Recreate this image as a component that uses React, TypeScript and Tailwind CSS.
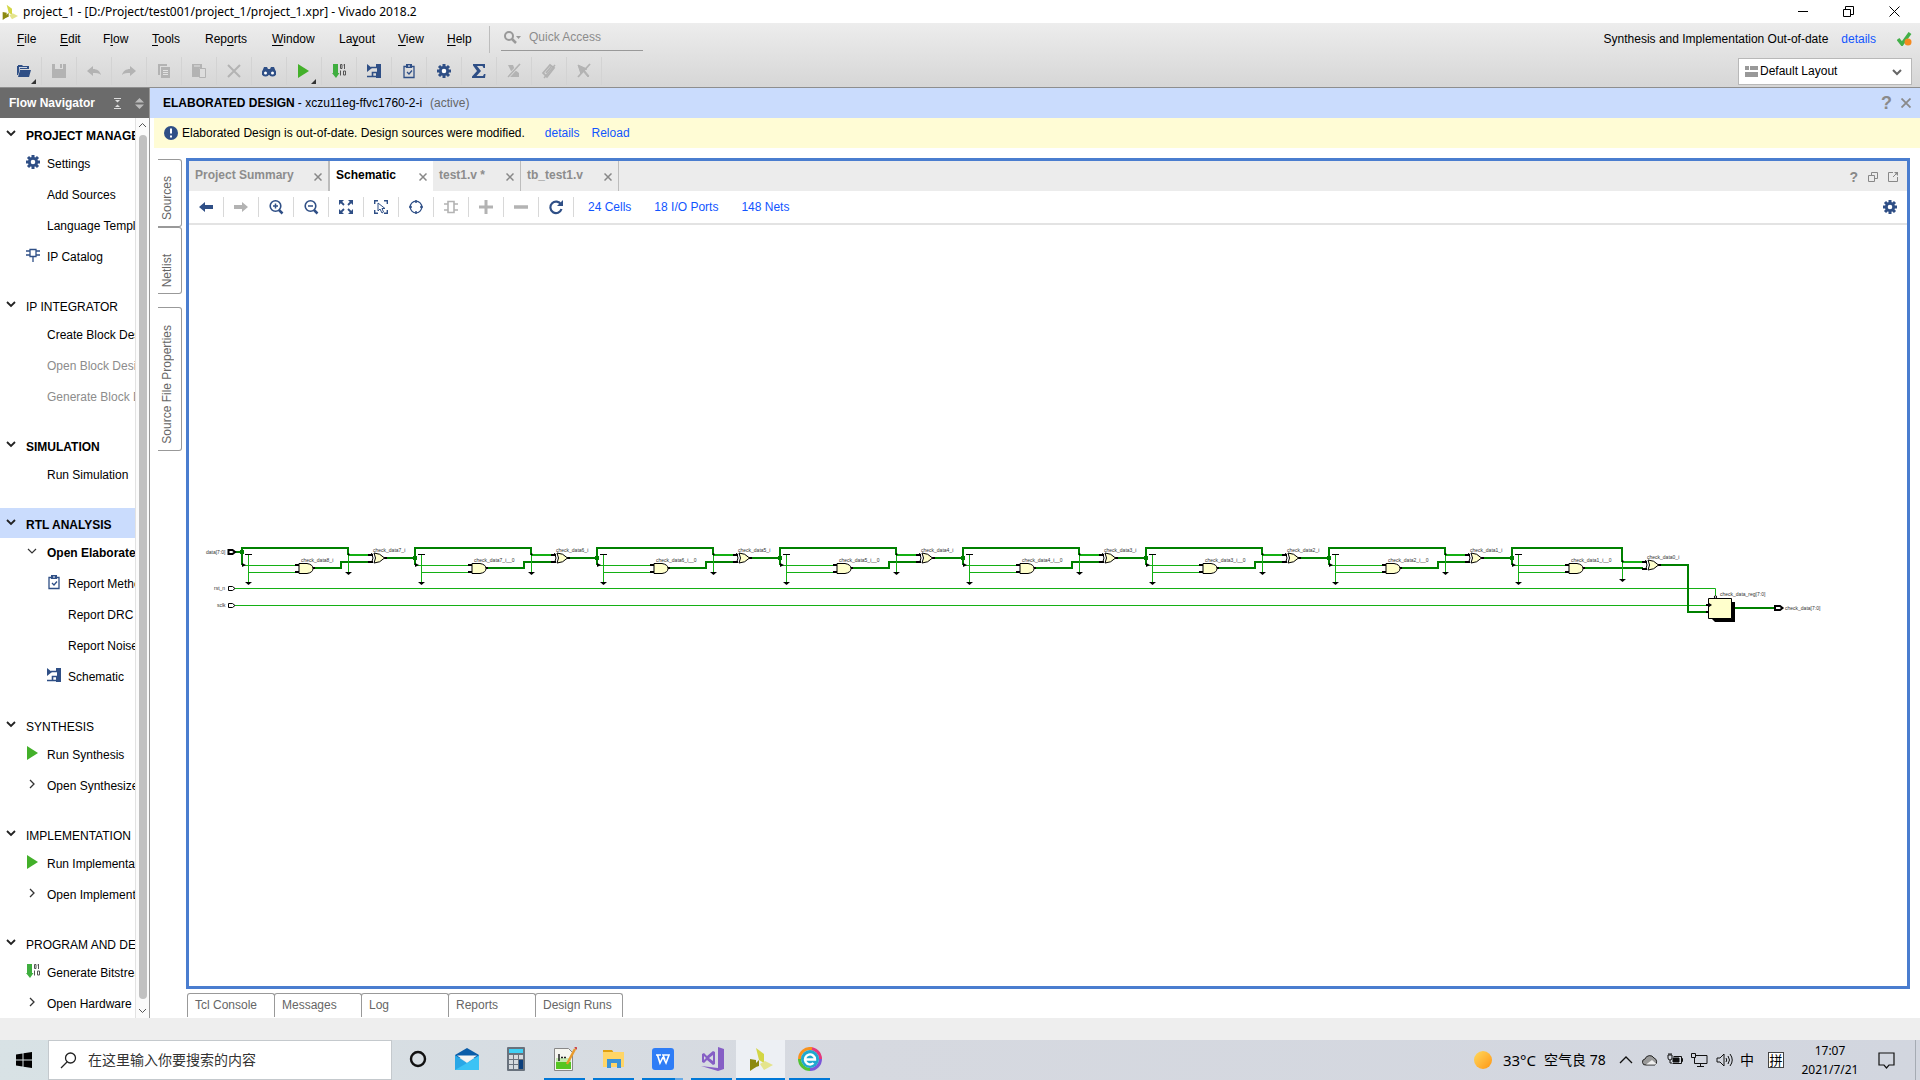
import { useState } from "react";
import type { ReactNode } from "react";

const NAVY = "#2f4f86";
const GREY = "#b3b3b3";

const icons: Record<string, ReactNode> = {
  open: (
    <>
      <path d="M0 11V2h1V1h4l1 1h6v3H3L1 11z" fill={NAVY} />
      <path d="M3 6h11l-2 7H1z" fill={NAVY} />
      <path d="M2 9V3h8v1H3z" fill="#fff" opacity=".75" />
    </>
  ),
  save: <path d="M0 0h3v5h8V0h3v14H0zM8 0h2v4H8z" fill={GREY} />,
  undo: <path d="M0 7l6-5v3c4 0 7 2 8 6-2-2-5-2-8-2v3z" fill={GREY} />,
  redo: <path d="M14 7L8 2v3c-4 0-7 2-8 6 2-2 5-2 8-2v3z" fill={GREY} />,
  copy: (
    <>
      <path d="M1 0h9v2H3v9H1z" fill={GREY} />
      <path d="M4 3h9v11H4z" fill={GREY} />
      <path d="M6 6.500h5M6 8.500h5M6 10.500h5" stroke="#e2e2e2" />
    </>
  ),
  paste: (
    <>
      <path d="M0 0h10v4H7v9H0z" fill={GREY} />
      <path d="M2 2h6" stroke="#e2e2e2" />
      <path d="M7.500 4.500h6v9h-6z" fill="#ddd" stroke={GREY} />
    </>
  ),
  cross: <path d="M1 1l12 12M13 1L1 13" stroke={GREY} strokeWidth="2" />,
  binoculars: (
    <>
      <path d="M0 8l2-5h3l1 2h2l1-2h3l2 5v3H0z" fill={NAVY} />
      <circle cx="3.500" cy="9" r="2.500" fill="#fff" stroke={NAVY} strokeWidth="2" />
      <circle cx="10.500" cy="9" r="2.500" fill="#fff" stroke={NAVY} strokeWidth="2" />
    </>
  ),
  run: <path d="M1 0l11 7-11 7z" fill="#43b02a" />,
  bits: (
    <>
      <path d="M1 0h5v9h1.500L4 14 0 9h1z" fill="#3fae3f" />
      <path d="M8.500 .500h1.500v4H8.500zM12.500 0v5M11.500 1h1M8.500 6.500v5M11.500 7h2v4h-2z" fill="none" stroke="#555" />
    </>
  ),
  schematic: (
    <>
      <path d="M0 0l5 4-5 4zM9 0h5v14H9V9h1V4H9z" fill={NAVY} />
      <path d="M4 3.500h6M10 8.500H5.500V12.500H0M5 12.500h5" fill="none" stroke={NAVY} strokeWidth="1.600" />
    </>
  ),
  clipboard: (
    <>
      <path d="M2 2.500h10v11H2z" fill="none" stroke={NAVY} strokeWidth="1.300" />
      <path d="M4 0h6v4H4z" fill={NAVY} />
      <path d="M6 1.500h2v1H6z" fill="#fff" />
      <path d="M5 8l2 2 3-3.500" fill="none" stroke={NAVY} strokeWidth="1.300" />
    </>
  ),
  gear: (
    <>
      <path d="M7 0v14M0 7h14M2 2l10 10M12 2L2 12" stroke={NAVY} strokeWidth="3" />
      <circle cx="7" cy="7" r="3.700" fill="#fff" stroke={NAVY} strokeWidth="2.800" />
    </>
  ),
  sigma: <path d="M1 0h12v4h-1.500L10.500 2H5l4 5-4.500 5H11l1-2h1.500L13 14H0v-1.500L5 7 1 1.500z" fill={NAVY} />,
  noMark: (
    <>
      <path d="M1 1h5l2 5 4 3v4H2l3-4z" fill={GREY} />
      <path d="M13 0L1 13" stroke="#dedede" strokeWidth="3" />
      <path d="M13 0L1 13" stroke={GREY} strokeWidth="1.600" />
    </>
  ),
  noTag: (
    <>
      <path d="M1 9l7-8 4 3-7 9zM4 9l5-6" fill="none" stroke={GREY} strokeWidth="1.800" />
      <path d="M13 1L2 14" stroke={GREY} strokeWidth="1.500" />
    </>
  ),
  noPin: (
    <>
      <path d="M1 1l9 4-3 1 5 6-1 1-5-6-2 3z" stroke={GREY} fill={GREY} />
      <path d="M13 0L1 13" stroke={GREY} strokeWidth="1.800" />
    </>
  ),
  back: <path d="M0 7l6-5v3h8v4H6v3z" fill={NAVY} />,
  forward: <path d="M14 7L8 2v3H0v4h8v3z" fill={GREY} />,
  zoomIn: (
    <>
      <circle cx="6.500" cy="6" r="5.300" fill="none" stroke={NAVY} strokeWidth="1.600" />
      <path d="M4 6h5M6.500 3.500v5" stroke={NAVY} strokeWidth="1.500" />
      <path d="M10 10l3.500 3.500" stroke={NAVY} strokeWidth="2.500" />
    </>
  ),
  zoomOut: (
    <>
      <circle cx="6.500" cy="6" r="5.300" fill="none" stroke={NAVY} strokeWidth="1.600" />
      <path d="M4 6h5" stroke={NAVY} strokeWidth="1.500" />
      <path d="M10 10l3.500 3.500" stroke={NAVY} strokeWidth="2.500" />
    </>
  ),
  fit: (
    <>
      <path d="M0 0h5L0 5zM14 0v5L9 0zM0 14V9l5 5zM14 14H9l5-5z" fill={NAVY} />
      <path d="M2 2l3 3M12 2L9 5M2 12l3-3M12 12L9 9" stroke={NAVY} strokeWidth="1.800" />
    </>
  ),
  select: (
    <>
      <path d="M.700 4V.700H4M10 .700h3.300V4M13.300 10v3.300H10M4 13.300H.700V10" fill="none" stroke={NAVY} strokeWidth="1.400" />
      <path d="M4 3v8l2-2 2 4 1.500-1L8 8.500h3z" fill="#fff" stroke={NAVY} />
    </>
  ),
  target: (
    <>
      <circle cx="7" cy="7" r="5.800" fill="none" stroke={NAVY} strokeWidth="1.300" />
      <path d="M7 0v3M7 11v3M0 7h3M11 7h3" stroke={NAVY} strokeWidth="1.500" />
    </>
  ),
  chip: <path d="M4 1.500h6v11H4zM0 4h4M0 10h4M10 4h4M10 10h4" fill="none" stroke={GREY} strokeWidth="1.600" />,
  plus: <path d="M7 0v14M0 7h14" stroke={GREY} strokeWidth="3" />,
  minus: <path d="M0 7h14" stroke={GREY} strokeWidth="3.500" />,
  refresh: (
    <>
      <path d="M12 4.500A5.700 5.700 0 1 0 12.500 9" fill="none" stroke={NAVY} strokeWidth="2.200" />
      <path d="M14 0v6H8z" fill={NAVY} />
    </>
  ),
  ip: <path d="M4 1.500h6v7H4zM0 3h4M0 7h4M10 3h4M10 7h4M7 9v5" fill="none" stroke={NAVY} strokeWidth="1.300" />,
  down: <path d="M2 4l4 4 4-4" fill="none" stroke="#222" strokeWidth="1.800" />,
  thinDown: <path d="M2 5l4 4 4-4" fill="none" stroke="#333" strokeWidth="1.200" />,
  right: <path d="M4 3l4 4-4 4" fill="none" stroke="#333" strokeWidth="1.300" />,
};

function Icon({ name }: { name: string }) {
  return (
    <svg width="14" height="14" viewBox="0 0 14 14" className="shrink-0 overflow-visible" aria-hidden="true">
      {icons[name]}
    </svg>
  );
}

function VivadoLogo({ size }: { size: number }) {
  return (
    <svg width={size} height={size} viewBox="0 0 24 24" className="shrink-0" aria-hidden="true">
      <path d="M7 1l8 6v9l-5-3z" fill="#d3d645" />
      <path d="M1 12l6 1v7l-6 4z" fill="#8c8a10" />
      <path d="M1 22l9-9v6z" fill="#8c8a10" />
      <path d="M11 17l5-3 8 4-9 5z" fill="#e4e48c" />
    </svg>
  );
}

const menus = [
  { label: "File", key: 0, w: "w-[43px]" },
  { label: "Edit", key: 0, w: "w-[43px]" },
  { label: "Flow", key: 1, w: "w-[49px]" },
  { label: "Tools", key: 0, w: "w-[53px]" },
  { label: "Reports", key: 3, w: "w-[67px]" },
  { label: "Window", key: 0, w: "w-[67px]" },
  { label: "Layout", key: 2, w: "w-[59px]" },
  { label: "View", key: 0, w: "w-[49px]" },
  { label: "Help", key: 0, w: "w-[42px]" },
];

const mainTools = [
  "open", "save", "undo", "redo", "copy", "paste", "cross", "binoculars", "run",
  "bits", "schematic", "clipboard", "gear", "sigma", "noMark", "noTag", "noPin",
];

const schematicTools = [
  "back", "forward", "zoomIn", "zoomOut", "fit", "select", "target", "chip", "plus", "minus", "refresh",
];

type NavItem = { label: string; icon?: string; sub?: boolean; bold?: boolean; disabled?: boolean };
type NavSection = { title: string; bold?: boolean; active?: boolean; items: NavItem[] };

const sections: NavSection[] = [
  {
    title: "PROJECT MANAGER",
    bold: true,
    items: [
      { label: "Settings", icon: "gear" },
      { label: "Add Sources" },
      { label: "Language Templates" },
      { label: "IP Catalog", icon: "ip" },
    ],
  },
  {
    title: "IP INTEGRATOR",
    items: [
      { label: "Create Block Design" },
      { label: "Open Block Design", disabled: true },
      { label: "Generate Block Design", disabled: true },
    ],
  },
  { title: "SIMULATION", bold: true, items: [{ label: "Run Simulation" }] },
  {
    title: "RTL ANALYSIS",
    bold: true,
    active: true,
    items: [
      { label: "Open Elaborated Design", icon: "thinDown", bold: true },
      { label: "Report Methodology", icon: "clipboard", sub: true },
      { label: "Report DRC", sub: true },
      { label: "Report Noise", sub: true },
      { label: "Schematic", icon: "schematic", sub: true },
    ],
  },
  {
    title: "SYNTHESIS",
    items: [
      { label: "Run Synthesis", icon: "run" },
      { label: "Open Synthesized Design", icon: "right" },
    ],
  },
  {
    title: "IMPLEMENTATION",
    items: [
      { label: "Run Implementation", icon: "run" },
      { label: "Open Implemented Design", icon: "right" },
    ],
  },
  {
    title: "PROGRAM AND DEBUG",
    items: [
      { label: "Generate Bitstream", icon: "bits" },
      { label: "Open Hardware Manager", icon: "right" },
    ],
  },
];

function TitleBar() {
  return (
    <header className="flex h-[23px] shrink-0 items-center bg-white pl-[2px] font-['Noto_Sans','Open_Sans',sans-serif] text-[12px] leading-4 text-black">
      <VivadoLogo size={16} />
      <span className="ml-[5px]">project_1 - [D:/Project/test001/project_1/project_1.xpr] - Vivado 2018.2</span>
      <div className="ml-auto flex pr-[20px]">
        <button aria-label="Minimize" className="flex w-[45px] justify-end">
          <svg width="11" height="11"><path d="M0 5.500h10" stroke="#000" /></svg>
        </button>
        <button aria-label="Restore" className="flex w-[45px] justify-end">
          <svg width="11" height="11" fill="none" stroke="#000"><path d="M.500 3.500h7v7h-7zM2.500 3V.500h8v8H8" /></svg>
        </button>
        <button aria-label="Close" className="flex w-[46px] justify-end">
          <svg width="11" height="11" stroke="#000"><path d="M.500.500l10 10M10.500.500l-10 10" /></svg>
        </button>
      </div>
    </header>
  );
}

function MenuArea() {
  const [query, setQuery] = useState<string>("");

  return (
    <div className="flex h-[65px] shrink-0 justify-between border-b border-[#8e8e8e] bg-linear-to-b from-[#ededed] to-[#d6d6d6] pt-px">
      <div>
        <div className="flex h-[30px] items-center pl-[17px]">
          {menus.map((m) => (
            <button key={m.label} className={`${m.w} text-left`}>
              {m.label.slice(0, m.key)}
              <span className="underline underline-offset-2">{m.label[m.key]}</span>
              {m.label.slice(m.key + 1)}
            </button>
          ))}
          <div className="h-[27px] w-px bg-[#bdbdbd]" />
          <label className="ml-[11px] flex h-[24px] w-[142px] items-center gap-[5px] border-b border-[#999] pl-[3px] pb-[3px]">
            <svg width="20" height="13" fill="none" stroke="#999" className="shrink-0" aria-hidden="true">
              <circle cx="5" cy="5" r="4" strokeWidth="2" />
              <path d="M8 8l4 4" strokeWidth="2.500" />
              <path d="M12 5h5l-2.500 3z" fill="#999" stroke="none" />
            </svg>
            <input
              aria-label="Quick Access"
              placeholder="Quick Access"
              value={query}
              onChange={(e) => setQuery(e.target.value)}
              className="w-full outline-none placeholder:text-[#8c8c8c]"
            />
          </label>
        </div>
        <div className="flex h-[34px] items-center pl-[7px]">
          {mainTools.map((t) => (
            <button key={t} aria-label={t} className="relative flex h-[28px] w-[35px] items-center justify-center border-r border-[#d3d3d3]">
              <Icon name={t} />
              {(t === "open" || t === "run") && (
                <svg width="5" height="5" className="absolute right-[5px] bottom-[1px]"><path d="M5 0v5H0z" fill="#333" /></svg>
              )}
            </button>
          ))}
        </div>
      </div>
      <div className="flex flex-col items-end pr-[8px]">
        <div className="flex h-[30px] items-center">
          <span>Synthesis and Implementation Out-of-date</span>
          <a href="#status" className="ml-[13px] text-[#1155ff]">details</a>
          <svg width="15" height="14" className="ml-[21px]" aria-hidden="true">
            <path d="M1 7l4 5 8-11" fill="none" stroke="#43b049" strokeWidth="3.500" />
            <circle cx="11" cy="10" r="3.500" fill="#f58a1f" />
          </svg>
        </div>
        <label className="relative mt-[4px] flex h-[27px] w-[174px] items-center border border-[#b8b8b8] bg-white pl-[6px]">
          <svg width="13" height="11" aria-hidden="true"><path d="M0 0h4v4H0zM5 0h8v4H5zM0 6h13v5H0z" fill="#999" /></svg>
          <select aria-label="Layout" className="ml-[2px] h-full flex-1 appearance-none bg-white pb-px outline-none">
            <option>Default Layout</option>
          </select>
          <svg width="10" height="7" className="pointer-events-none absolute right-[9px] top-[10px]"><path d="M1 1l4 4 4-4" fill="none" stroke="#666" strokeWidth="2" /></svg>
        </label>
      </div>
    </div>
  );
}

function FlowNavigator() {
  return (
    <aside className="flex w-[150px] shrink-0 flex-col border-r border-[#999]">
      <div className="flex h-[30px] shrink-0 items-center bg-[#6b6b6b] pl-[9px] font-bold text-white">
        Flow Navigator
        <svg width="9" height="11" className="ml-auto" aria-hidden="true"><path d="M1 .500h7M1 10.500h7" stroke="#ddd" /><path d="M2 2h5L4.500 4.500zM2 9h5L4.500 6.500z" fill="#ddd" /></svg>
        <svg width="9" height="11" className="ml-[13px] mr-[5px]" aria-hidden="true"><path d="M0 4.500h9L4.500 0zM0 6.500h9L4.500 11z" fill="#bbb" /></svg>
      </div>
      <div className="flex min-h-0 flex-1">
        <nav className="min-w-0 flex-1 overflow-hidden whitespace-nowrap pt-px">
          {sections.map((s) => (
            <section key={s.title} className="mb-[17px]">
              <button className={`flex h-[30px] w-full items-center gap-[7px] pl-[5px] pt-[3px] ${s.bold ? "font-bold" : ""} ${s.active ? "bg-[#cadcfd]" : ""}`}>
                <span className="-mt-1"><Icon name="down" /></span>
                {s.title}
              </button>
              {s.items.map((item) => (
                <button
                  key={item.label}
                  disabled={item.disabled}
                  className={`flex h-[31px] items-center gap-[7px] pb-[2px] ${item.sub ? "pl-[47px]" : "pl-[26px]"} ${item.bold ? "font-bold" : ""} ${item.disabled ? "text-[#8c8c8c]" : ""}`}
                >
                  <span className="mb-[3px] h-[14px] w-[14px] shrink-0">{item.icon && <Icon name={item.icon} />}</span>
                  {item.label}
                </button>
              ))}
            </section>
          ))}
        </nav>
        <div className="flex w-[14px] shrink-0 flex-col items-center border-l border-[#e2e2e2] bg-[#fbfbfb]">
          <svg width="9" height="17" fill="none" stroke="#555"><path d="M1 9l3.500-3.500L8 9" /></svg>
          <div className="w-[8px] flex-1 rounded-full bg-[#c1c1c1]" />
          <svg width="9" height="19" fill="none" stroke="#555"><path d="M1 10l3.500 3.500L8 10" /></svg>
        </div>
      </div>
    </aside>
  );
}

function SideTab({ label, size }: { label: string; size: string }) {
  return (
    <button className={`flex w-[24px] items-end justify-center rounded-r-[3px] border border-l-0 border-[#999] pb-[6px] pr-[6px] text-[#666] ${size}`}>
      <span className="rotate-180 whitespace-nowrap [writing-mode:vertical-rl]">{label}</span>
    </button>
  );
}

const GREEN = "#008000";
const LIME = "#14b014";

// one AND + XOR pair; x is the bus junction, shift moves the XOR side
function Stage({ x, inY, shift, last, andLabel, xorLabel }: { x: number; inY: number; shift: number; last: boolean; andLabel: string; xorLabel: string }) {
  const s = x + shift;
  const top = last ? s + 110 : s + 116;
  const xorX = last ? s + 134 : s + 140;
  const xorY = last ? 565 : 558;
  const a = xorY - 3;
  return (
    <g>
      <g fill="none" stroke={GREEN} strokeWidth="2">
        <path d={`M${x} 565V548H${top}V${a}`} />
        <path d={last ? `M${x + 72} 568H${xorX - 3}` : `M${x + 72} 568H${s + 109}V562H${xorX - 3}`} />
      </g>
      <path d={`M${x - 2} ${inY - 2}h4v4h-4z`} fill={GREEN} />
      <g fill="none" stroke={LIME}>
        <path d={`M${x + 2} 565.500H${x + 55}M${x + 6.5} 554V583M${x + 7} 572.500H${x + 55}`} />
        <path d={`M${top + 0.5} ${a}V${a + 18}`} />
        <path d={`M${top + 1} ${a}H${xorX - 3}`} strokeWidth="2" />
      </g>
      <g fill="#000">
        <path d={`M${x} 563l4 2-4 2z`} />
        <path d={`M${x + 3} 554h7v1h-7z`} />
        <path d={`M${x + 3} 582h7l-3.500 3z`} />
        <path d={`M${top - 3} ${a + 17}h7l-3.500 3z`} />
        <path d={`M${x + 53} 564h4v2h-4zM${x + 53} 571h4v2h-4zM${x + 70} 567h3v2h-3z`} />
        <path d={`M${xorX - 4} ${a - 1}h5v2h-5zM${xorX - 4} ${xorY + 3}h5v2h-5zM${xorX + 12} ${xorY - 1}h3v2h-3z`} />
        <path d={`M${top} ${a - 2}l2 1-2 2z`} />
      </g>
      <path d={`M${x + 57} 563.500h8q6 1 6 5t-6 5h-8z`} fill="#ffffcc" stroke="#000" />
      <path d={`M${xorX + 2} ${xorY - 5}q6 0 10.500 5q-4.500 5 -10.500 5q3 -5 0 -10z`} fill="#ffffcc" stroke="#000" />
      <path d={`M${xorX - 0.5} ${xorY - 5}q3 5 0 10`} fill="none" stroke="#000" />
      <text x={x + 59} y="562">{andLabel}</text>
      <text x={xorX + 1} y={xorY - 6}>{xorLabel}</text>
    </g>
  );
}

const junctions = [242, 415, 597, 780, 963, 1146, 1329, 1512];

function Schematic() {
  return (
    <svg viewBox="189 225 1718 761" className="min-h-0 w-full flex-1 font-['Liberation_Sans',Arial,sans-serif] text-[5px]" fill="#333" role="img" aria-label="Schematic">
      <g fill="none" stroke={LIME}>
        <path d="M235 588.500H1715.500V597" />
        <path d="M235 605.500H1708" />
      </g>
      <g fill="none" stroke={GREEN} strokeWidth="2">
        <path d="M235 552H242" />
        {junctions.slice(1).map((x, i) => (
          <path key={x} d={`M${junctions[i] + (i === 0 ? 144 : 154)} 558H${x}`} />
        ))}
        <path d="M1660 565H1688V612H1708" />
        <path d="M1735 608H1774" />
      </g>
      {junctions.map((x, i) => (
        <Stage
          key={x}
          x={x}
          inY={i === 0 ? 552 : 558}
          shift={i === 0 ? -10 : 0}
          last={i === 7}
          andLabel={i === 0 ? "check_data8_i" : `check_data${8 - i}_i__0`}
          xorLabel={`check_data${7 - i}_i`}
        />
      ))}
      <path d="M1712 602h23v20h-20l-4-4z" fill="#000" />
      <path d="M1708.500 598.500h23v20h-23z" fill="#ffffcc" stroke="#000" />
      <path d="M1706 604h3v2h-3zM1706 611h3v2h-3zM1709 603l3 2-3 2z" fill="#000" />
      <circle cx="1715.500" cy="597" r="1.200" fill="#fff" stroke="#000" />
      <g fill="#fff" stroke="#000">
        <path d="M228.500 550h4l2.500 2-2.500 2h-4z" strokeWidth="2" />
        <path d="M228.500 586.500h4l2.500 2-2.500 2h-4z" />
        <path d="M228.500 603.500h4l2.500 2-2.500 2h-4z" />
        <path d="M1775 606h5l2.500 2-2.500 2h-5z" strokeWidth="2" />
      </g>
      <text x="206" y="554">data[7:0]</text>
      <text x="214" y="590">rst_n</text>
      <text x="217" y="607">sclk</text>
      <text x="1720" y="596">check_data_reg[7:0]</text>
      <text x="1785" y="610">check_data[7:0]</text>
    </svg>
  );
}

const tabs = [
  { label: "Project Summary", style: "w-[141px] border-r-2 border-[#bdbdbd] text-[#8c8c8c]" },
  { label: "Schematic", style: "w-[103px] bg-white text-black" },
  { label: "test1.v *", style: "w-[88px] border-r border-[#bdbdbd] text-[#8c8c8c]" },
  { label: "tb_test1.v", style: "w-[98px] border-r border-[#bdbdbd] text-[#8c8c8c]" },
];

function SchematicPanel() {
  return (
    <main className="mr-[10px] ml-[4px] flex min-w-0 flex-1 flex-col border-3 border-[#4a7dcf] bg-white">
      <div className="flex h-[30px] shrink-0 items-center bg-[#ececec]">
        {tabs.map((t) => (
          <button key={t.label} className={`flex h-full items-center justify-between pr-[6px] pb-[2px] pl-[6px] font-bold ${t.style}`}>
            {t.label}
            <svg width="8" height="8" className="mt-[4px]" stroke="#888" strokeWidth="1.500"><path d="M.500.500l7 7M7.500.500l-7 7" /></svg>
          </button>
        ))}
        <div className="ml-auto flex items-center gap-[10px] pr-[9px] pt-[2px] text-[#888]">
          <button aria-label="Help" className="text-[14px] leading-4 font-bold">?</button>
          <button aria-label="Restore">
            <svg width="10" height="10" fill="none" stroke="#888"><path d="M.500 3.500h6v6h-6zM3.500 3V.500h6v6H7" /></svg>
          </button>
          <button aria-label="Float">
            <svg width="10" height="10" fill="none" stroke="#888"><path d="M5 .500H.500v9h9V5M5 5l4-4" /><path d="M6 0h4v4z" fill="#888" stroke="none" /></svg>
          </button>
        </div>
      </div>
      <div className="flex h-[34px] shrink-0 items-center border-b-2 border-[#e3e3e3]">
        {schematicTools.map((t) => (
          <button key={t} aria-label={t} className="flex h-[20px] w-[35px] items-center justify-center border-r border-[#d8d8d8]">
            <Icon name={t} />
          </button>
        ))}
        <div className="flex gap-[23px] pl-[14px] text-[#1155ff]">
          <a href="#cells">24 Cells</a>
          <a href="#ports">18 I/O Ports</a>
          <a href="#nets">148 Nets</a>
        </div>
        <button aria-label="Settings" className="ml-auto mr-[10px]"><Icon name="gear" /></button>
      </div>
      <Schematic />
    </main>
  );
}

function DesignArea() {
  return (
    <div className="flex min-w-0 flex-1 flex-col bg-white">
      <div className="flex h-[30px] shrink-0 items-center bg-[#cadcfd] pl-[13px] pr-[9px]">
        <h1 className="font-bold">ELABORATED DESIGN</h1>
        <span className="ml-[3px]">- xczu11eg-ffvc1760-2-i</span>
        <span className="ml-[8px] text-[#666]">(active)</span>
        <button aria-label="Help" className="ml-auto text-[18px] leading-5 font-bold text-[#8a8a8a]">?</button>
        <button aria-label="Close" className="ml-[9px]">
          <svg width="10" height="10" stroke="#8a8a8a" strokeWidth="1.800"><path d="M.500.500l9 9M9.500.500l-9 9" /></svg>
        </button>
      </div>
      <div className="ml-[4px] flex h-[30px] shrink-0 items-center bg-[#fffcd5] pl-[10px]">
        <svg width="14" height="14" aria-hidden="true"><circle cx="7" cy="7" r="7" fill={NAVY} /><path d="M7 2.500v5M7 9.500v2" stroke="#fff" strokeWidth="2" /></svg>
        <span className="ml-[4px]">Elaborated Design is out-of-date. Design sources were modified.</span>
        <a href="#details" className="ml-[20px] text-[#1155ff]">details</a>
        <a href="#reload" className="ml-[12px] text-[#1155ff]">Reload</a>
      </div>
      <div className="mt-[10px] flex min-h-0 flex-1 pl-[8px]">
        <div className="flex shrink-0 flex-col pt-px">
          <SideTab label="Sources" size="h-[68px]" />
          <SideTab label="Netlist" size="h-[67px]" />
          <div className="h-[13px]" />
          <SideTab label="Source File Properties" size="h-[144px]" />
        </div>
        <SchematicPanel />
      </div>
      <div className="mt-[4px] flex h-[25px] shrink-0 pb-px pl-[37px] text-[#666]">
        {["Tcl Console", "Messages", "Log", "Reports", "Design Runs"].map((t) => (
          <button key={t} className="-mr-px w-[88px] rounded-t-[3px] border border-b-0 border-[#999] pb-[2px] pl-[7px] text-left">{t}</button>
        ))}
      </div>
    </div>
  );
}

const apps: { name: string; bar: string; icon: ReactNode }[] = [
  { name: "Cortana", bar: "", icon: <circle cx="12" cy="12" r="7" fill="none" stroke="#111" strokeWidth="2.400" /> },
  {
    name: "Mail",
    bar: "",
    icon: (
      <>
        <path d="M0 8l12-7 12 7v3H0z" fill="#0a5ca8" />
        <path d="M0 8v15h24V8l-12 8z" fill="#2aa7e6" />
        <path d="M0 23l24-14v14z" fill="#3cc3f5" />
        <path d="M2 8.500h20l-10 7z" fill="#f4f4f4" />
      </>
    ),
  },
  {
    name: "Calculator",
    bar: "",
    icon: (
      <>
        <rect x="3" width="18" height="24" rx="1" fill="#69727d" />
        <path d="M5 2h14v4H5z" fill="#3fd0f5" />
        <path d="M5 8h4v4H5zM10 8h4v4h-4zM15 8h4v4h-4zM5 13h4v4H5zM10 13h4v4h-4zM5 18h4v4H5zM10 18h4v4h-4z" fill="#d5dade" />
        <path d="M15 13h4v9h-4z" fill="#0c3f7c" />
      </>
    ),
  },
  {
    name: "Notepad++",
    bar: "bg-[#0078d7]",
    icon: (
      <>
        <path d="M1.500 1.500h14l4 4v18h-18z" fill="#f6f6f0" stroke="#888" />
        <path d="M3 11h15v5H3z" fill="#c5eab0" />
        <path d="M3 15h15v7H3z" fill="#55c522" />
        <path d="M6 7v7M8 10.500h2M11 10.500h2" stroke="#222" strokeWidth="1.500" />
        <path d="M22 2l-8 15" stroke="#e89a2c" strokeWidth="2.500" />
        <path d="M22 0l2 2" stroke="#c44" strokeWidth="2" />
      </>
    ),
  },
  {
    name: "Explorer",
    bar: "bg-[#0078d7]",
    icon: (
      <>
        <path d="M1 3h9l2 3H1z" fill="#e0a010" />
        <path d="M1 5h21v15H1z" fill="#ffd566" />
        <path d="M5 21v-9h14v9h-4v-5H9v5z" fill="#3b93d8" />
      </>
    ),
  },
  {
    name: "WPS",
    bar: "bg-linear-to-r from-[#0078d7] from-80% to-[#66aae6] to-80%",
    icon: (
      <>
        <rect x="1" y="1" width="22" height="22" rx="3" fill="#2f7df6" />
        <path d="M5 8h5M6.500 8l2.500 8 3-6 3 6 3-8h-6l2 5" fill="none" stroke="#fff" strokeWidth="1.600" />
      </>
    ),
  },
  {
    name: "Visual Studio",
    bar: "bg-[#0078d7]",
    icon: (
      <>
        <path d="M18 0l6 2v20l-6 2-17-5 17 2z" fill="#865fc5" />
        <path d="M2 7l2-1 3 3 6-5 2 1v12l-2 1-6-5-3 3-2-1zM4 9v4l2-2zM13 8l-4 3 4 3z" fill="#865fc5" fillRule="evenodd" />
      </>
    ),
  },
  { name: "Vivado", bar: "bg-[#0078d7]", icon: null },
  {
    name: "Browser",
    bar: "bg-[#0078d7]",
    icon: (
      <>
        <path d="M12 1.500A10.500 10.500 0 0 1 22.500 12" fill="none" stroke="#e5397c" strokeWidth="3" />
        <path d="M1.500 12A10.500 10.500 0 0 1 14 1.700" fill="none" stroke="#f7911e" strokeWidth="3" />
        <path d="M12 22.500A10.500 10.500 0 0 1 1.500 12" fill="none" stroke="#52c234" strokeWidth="3" />
        <path d="M22.500 12A10.500 10.500 0 0 1 12 22.500" fill="none" stroke="#7b56d8" strokeWidth="3" />
        <circle cx="12" cy="12" r="9" fill="#1fa8cf" />
        <path d="M7 12.500h10a5 5 0 1 0-1.500 3.500" fill="none" stroke="#fff" strokeWidth="2.400" />
      </>
    ),
  },
];

function Taskbar() {
  const [search, setSearch] = useState<string>("");

  return (
    <footer className="flex h-[40px] shrink-0 bg-linear-to-r from-[#d8e2e5] via-[#d6d9e0] via-45% to-[#d2d6df] font-['Noto_Sans','Noto_Sans_CJK_SC',sans-serif] text-black">
      <button aria-label="Start" className="flex w-[48px] items-center justify-center">
        <svg width="16" height="16"><path d="M0 2.500l6.500-1v6H0zM7.500 1.300L16 0v7.500H7.500zM0 8.500h6.500v6L0 13.500zM7.500 8.500H16V16l-8.500-1.300z" /></svg>
      </button>
      <label className="flex w-[344px] items-center border border-[#c4c9cd] bg-white pl-[11px]">
        <svg width="17" height="17" fill="none" stroke="#222" strokeWidth="1.300" aria-hidden="true"><circle cx="10.500" cy="6" r="5" /><path d="M7 10l-6 6" /></svg>
        <input
          aria-label="在这里输入你要搜索的内容"
          placeholder="在这里输入你要搜索的内容"
          value={search}
          onChange={(e) => setSearch(e.target.value)}
          className="ml-[11px] flex-1 text-[14px] outline-none placeholder:text-[#333]"
        />
      </label>
      <div className="flex pl-px">
        {apps.map((a) => (
          <button key={a.name} aria-label={a.name} className={`flex w-[49px] flex-col items-center ${a.name === "Vivado" ? "bg-[#edf0f4]" : "px-[4px]"}`}>
            <span className="flex flex-1 items-center">
              {a.icon ? <svg width="24" height="24" viewBox="0 0 24 24">{a.icon}</svg> : <VivadoLogo size={24} />}
            </span>
            <span className={`h-[2px] w-full ${a.bar}`} />
          </button>
        ))}
      </div>
      <div className="ml-auto flex items-center text-[15px] leading-5">
        <div className="h-[18px] w-[18px] rounded-full bg-linear-to-br from-[#ffd95a] to-[#ff9500]" />
        <span className="ml-[11px]">33°C</span>
        <span className="ml-[8px] w-[74px] whitespace-nowrap text-[14px]">空气良 78</span>
        <div className="flex items-center gap-[8px]">
          <svg width="16" height="16" fill="none" stroke="#111" strokeWidth="1.300"><path d="M2 11l6-6 6 6" /></svg>
          <svg width="17" height="16"><path d="M4 13a3 3 0 0 1-1-6 5 5 0 0 1 9-1 4 4 0 0 1 1 7z" fill="#999" stroke="#222" /><path d="M4 12.500l6-4.500 5 4.500z" fill="#eee" /></svg>
          <svg width="16" height="16" fill="none" stroke="#111"><path d="M6.500 4.500h8v7h-9M14.500 6.500h1v3h-1" /><path d="M6 6h6v4H6z" fill="#111" /><path d="M1 3v3q0 2 2 2t2-2V3zM2 1v2M4 1v2M3 8v3h2" /></svg>
          <svg width="17" height="16" fill="none" stroke="#111"><path d="M5 3.500h11v8H3.500V6M9.500 12v3M6 14.500h7M.500 1.500h4v4h-4z" /></svg>
          <svg width="17" height="16" fill="none" stroke="#111"><path d="M1 6v4h3l4 4V2L4 6zM10 6q1.500 2 0 4M12 4q3 4 0 8M14 2q4.500 6 0 12" /></svg>
        </div>
        <span className="ml-[7px] text-[14px]">中</span>
        <span className="ml-[14px] flex h-[16px] w-[16px] items-center justify-center border border-[#444] bg-white text-[13px]">拼</span>
        <div className="ml-[16px] w-[60px] text-center text-[12px] leading-[19px]">
          <div>17:07</div>
          <div>2021/7/21</div>
        </div>
        <button aria-label="Notifications" className="ml-[18px] mr-[20px]">
          <svg width="17" height="17" fill="none" stroke="#111" strokeWidth="1.200"><path d="M1 1h15v12h-5l-2.500 3L6 13H1z" /></svg>
        </button>
        <div className="mr-[4px] h-[40px] w-px bg-[#a5abb3]" />
      </div>
    </footer>
  );
}

export default function App() {
  return (
    <div className="flex h-screen flex-col overflow-hidden bg-[#eee] font-['Liberation_Sans',Arial,sans-serif] text-[12px] leading-4 text-black">
      <TitleBar />
      <MenuArea />
      <div className="mb-[22px] flex min-h-0 flex-1 bg-white">
        <FlowNavigator />
        <DesignArea />
      </div>
      <Taskbar />
    </div>
  );
}
